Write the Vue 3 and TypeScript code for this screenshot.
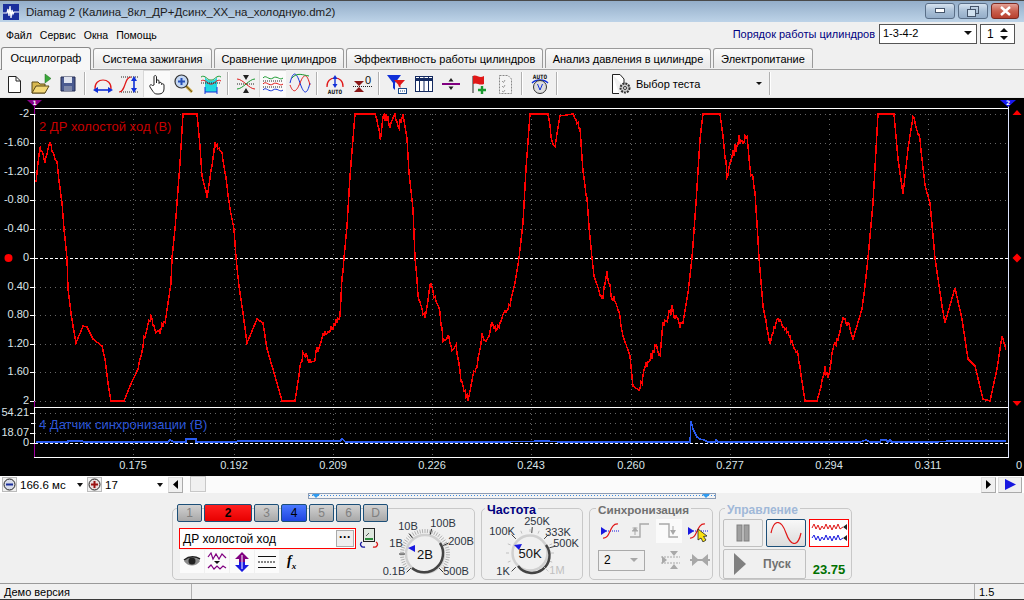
<script setup lang="ts">
const tabs = [
  { name: 'Осциллограф', w: 90 },
  { name: 'Система зажигания', w: 119 },
  { name: 'Сравнение цилиндров', w: 130 },
  { name: 'Эффективность работы цилиндров', w: 197 },
  { name: 'Анализ давления в цилиндре', w: 166 },
  { name: 'Электропитание', w: 100 },
]

const yLabels = [
  { t: '-2', y: 113 }, { t: '-1.60', y: 142 }, { t: '-1.20', y: 171 }, { t: '-0.80', y: 199 },
  { t: '-0.40', y: 228 }, { t: '0', y: 257 }, { t: '0.40', y: 286 }, { t: '0.80', y: 314 },
  { t: '1.20', y: 343 }, { t: '1.60', y: 371 }, { t: '2', y: 400 },
]
const xLabels = [
  { t: '0.175', x: 133 }, { t: '0.192', x: 234 }, { t: '0.209', x: 333 }, { t: '0.226', x: 432 },
  { t: '0.243', x: 531 }, { t: '0.260', x: 631 }, { t: '0.277', x: 730 }, { t: '0.294', x: 829 },
  { t: '0.311', x: 928 },
]

// traced from the trace in the screenshot: x, y
const redPts = [
  36,178, 40,145, 45,160, 50,143, 57,162, 59,182, 62,202, 64,228, 67,257, 68,288, 71,312, 73,325, 76,342,
  83,325, 87,326, 93,338, 102,345, 105,358, 108,382, 111,400, 124,400, 130,385, 138,368, 142,348, 147,325,
  150,317, 158,332, 165,322, 168,302, 171,282, 172,257, 175,228, 177,202, 180,162, 183,113, 197,113, 200,145,
  202,175, 207,195, 210,178, 215,142, 222,152, 227,185, 230,208, 234,228, 236,257, 239,285, 243,312, 247,342,
  257,318, 263,322, 267,348, 277,382, 282,400, 295,400, 300,368, 303,352, 313,362, 322,335, 333,325, 339,315,
  340,312, 342,278, 344,257, 347,225, 350,175, 353,138, 355,113, 375,113, 378,122, 381,140, 383,118, 388,114,
  390,127, 395,115, 399,125, 403,113, 407,138, 409,172, 413,208, 415,257, 417,278, 418,295, 423,312, 425,318,
  430,282, 435,298, 439,305, 443,338, 448,335, 452,348, 456,345, 461,378, 468,400, 473,372, 477,365, 482,335,
  487,340, 492,322, 497,328, 503,315, 510,302, 515,282, 519,257, 523,222, 526,168, 530,113, 548,113, 552,135,
  554,150, 560,115, 573,113, 580,128, 583,172, 587,198, 590,235, 592,257, 594,275, 602,298, 607,273, 612,295,
  617,305, 623,335, 630,355, 633,385, 640,390, 645,365, 652,355, 655,342, 660,352, 663,325, 672,308, 679,322,
  683,322, 688,292, 692,257, 696,202, 700,138, 703,113, 720,113, 723,135, 727,175, 733,152, 740,138, 747,137,
  750,168, 754,182, 757,222, 759,257, 763,305, 767,328, 770,340, 778,318, 787,332, 793,342, 798,355, 805,400,
  817,400, 822,382, 825,368, 828,378, 833,348, 838,338, 843,318, 848,322, 853,338, 862,308, 865,285, 868,257,
  873,202, 878,113, 894,113, 898,158, 903,193, 908,148, 913,115, 920,138, 925,185, 930,202, 935,257, 942,305,
  945,322, 955,287, 962,318, 968,358, 975,365, 983,398, 990,400, 997,368, 1002,335, 1007,352,
]
// x from, x to, how much the signal jitters there
const noisy = [
  [36, 60, 3], [140, 165, 4], [205, 228, 2], [300, 345, 4], [378, 403, 5], [418, 510, 3], [550, 556, 6],
  [575, 590, 3], [600, 620, 5], [640, 680, 5], [725, 755, 6], [765, 800, 3], [822, 850, 3], [912, 925, 2],
]

function jitter(x: number): number {
  const zone = noisy.find((n) => x >= n[0] && x <= n[1])
  if (!zone) return 0
  const r = Math.sin(x * 12.9898) * 43758.5453
  return (r - Math.floor(r) - 0.5) * 2 * zone[2]
}

function buildRed(): string {
  const out: string[] = []
  for (let i = 0; i < redPts.length - 2; i += 2) {
    const [x0, y0, x1, y1] = [redPts[i], redPts[i + 1], redPts[i + 2], redPts[i + 3]]
    for (let x = x0; x < x1; x++) {
      const y = y0 + ((y1 - y0) * (x - x0)) / (x1 - x0) + jitter(x)
      out.push(`${x},${Math.min(400, Math.max(113, y)).toFixed(1)}`)
    }
  }
  return out.join(' ')
}
const redPath = buildRed()

const bluePath =
  '36,441 68,441 68,440 82,440 84,441 168,441 170,439 174,441 186,441 186,438 196,438 196,441 236,441 238,440 ' +
  '300,440 340,440 342,438 346,441 420,441 500,441 546,440 560,441 640,441 660,441 672,441 690,441 691,420 ' +
  '693,428 695,432 697,436 700,438 704,439 708,441 715,441 716,439 718,441 760,441 860,441 866,439 870,441 ' +
  '880,441 881,439 886,439 888,441 890,439 892,441 936,441 950,440 1006,440'

function polar(cx: number, cy: number, r: number, deg: number) {
  const a = (deg * Math.PI) / 180
  return { x: cx + r * Math.cos(a), y: cy + r * Math.sin(a) }
}

function ticks(cx: number, cy: number, r1: number, r2: number, from: number, to: number, n: number) {
  const list = []
  for (let i = 0; i <= n; i++) {
    const d = n ? from + ((to - from) * i) / n : from
    const a = polar(cx, cy, r1, d)
    const b = polar(cx, cy, r2, d)
    list.push({ x1: a.x, y1: a.y, x2: b.x, y2: b.y })
  }
  return list
}

const dial1Fine = ticks(425, 553, 21, 25, 135, 405, 44)
const dial1Major = [135, 180, 232, 285, 335, 405].map((d) => ticks(425, 553, 20, 26, d, d, 0)[0])
const dial2Major = [135, 225, 275, 315, 345, 405].map((d) => ticks(530, 552, 20, 26, d, d, 0)[0])
const dial2Fine = ticks(530, 552, 21, 24, 135, 405, 12)
</script>

<template>
  <div class="window">
    <header class="titlebar">
      <svg class="app-icon" width="16" height="16" viewBox="0 0 16 16">
        <rect width="16" height="16" fill="#1a2f9c" />
        <path d="M0 9H4L5 5L6 12L7 2L8 14L9 6L10 10L11 8H16" fill="none" stroke="#fff" stroke-width="1.2" />
      </svg>
      <span class="title-text">Diamag 2 (Калина_8кл_ДР+Дсинх_ХХ_на_холодную.dm2)</span>
      <div class="win-btns">
        <div class="win-btn">
          <svg width="10" height="6" viewBox="0 0 10 6"><rect x="0.5" y="0.5" width="9" height="4" fill="#fff" stroke="#44546a" /></svg>
        </div>
        <div class="win-btn">
          <svg width="12" height="11" viewBox="0 0 12 11">
            <rect x="3.5" y="0.5" width="8" height="7" fill="none" stroke="#44546a" />
            <rect x="0.5" y="3.5" width="8" height="7" fill="#cfe0ef" stroke="#44546a" />
          </svg>
        </div>
        <div class="win-btn close">
          <svg width="13" height="10" viewBox="0 0 13 10"><path d="M2 1L11 9M11 1L2 9" stroke="#fff" stroke-width="2.4" /></svg>
        </div>
      </div>
    </header>

    <div class="menubar">
      <nav class="menu">
        <span>Файл</span><span>Сервис</span><span>Окна</span><span>Помощь</span>
      </nav>
      <span class="order-label">Порядок работы цилиндров</span>
      <div class="order-select">
        <span>1-3-4-2</span>
        <i class="caret"></i>
      </div>
      <div class="order-spin">
        <span>1</span>
        <div class="spin-arrows"><i class="up"></i><i class="caret"></i></div>
      </div>
    </div>

    <div class="tabs">
      <div
        v-for="(tab, i) in tabs"
        :key="tab.name"
        class="tab"
        :class="{ active: i === 0 }"
        :style="{ width: tab.w + 'px' }"
      >
        {{ tab.name }}
      </div>
    </div>

    <div class="toolbar">
      <div class="tb">
        <svg viewBox="0 0 22 22"><path d="M5.5 3.5H13L17.5 8V19.5H5.5Z" fill="#fff" stroke="#222" /><path d="M13 3.5V8H17.5" fill="none" stroke="#222" /></svg>
      </div>
      <div class="tb">
        <svg viewBox="0 0 22 22">
          <path d="M15 1V10L21 5.5Z" fill="#3aa83a" stroke="#1d6b1d" stroke-width="0.5" />
          <path d="M2 20V9H8L10 11H15V20Z" fill="#d8b850" stroke="#5a4a18" />
          <path d="M2 20L6 13H19L15 20Z" fill="#f3d878" stroke="#5a4a18" />
        </svg>
      </div>
      <div class="tb">
        <svg viewBox="0 0 22 22">
          <path d="M4 4H18V18H4Z" fill="#4a5a90" stroke="#222a50" />
          <rect x="7" y="4" width="8" height="6" fill="#dfe3ee" />
          <rect x="7" y="13" width="8" height="5" fill="#7d87a8" />
        </svg>
      </div>
      <div class="sep"></div>
      <div class="tb">
        <svg viewBox="0 0 22 22">
          <path d="M3 16C2 4 20 4 19 16" fill="none" stroke="#e01818" stroke-width="1.2" />
          <path d="M4 17H18" stroke="#1030d8" stroke-width="1.6" />
          <path d="M1 17L6 14V20ZM21 17L16 14V20Z" fill="#1030d8" />
        </svg>
      </div>
      <div class="tb">
        <svg viewBox="0 0 22 22">
          <path d="M2 4H20M2 19H20" stroke="#222" stroke-dasharray="1 1" />
          <path d="M0 19C7 19 5 4 12 4" fill="none" stroke="#e01818" stroke-width="1.2" />
          <path d="M15 6V17" stroke="#1030d8" stroke-width="1.6" />
          <path d="M15 3L12 8H18ZM15 20L12 15H18Z" fill="#1030d8" />
        </svg>
      </div>
      <div class="tb pressed">
        <svg viewBox="0 0 22 22">
          <path d="M8 12V4C8 2 10.5 2 10.5 4V10V8C10.5 6.5 13 6.5 13 8V10.5C13 9 15.5 9 15.5 10.5V11.5C15.5 10.5 18 10.5 18 12V16C18 19 16 21 13 21H11C9 21 8 20 7 18.5L4 14C3 12 5 11 6.5 12.5Z" fill="#fff" stroke="#222" stroke-width="1" />
        </svg>
      </div>
      <div class="tb">
        <svg viewBox="0 0 22 22">
          <path d="M13 13L19 19" stroke="#c09a30" stroke-width="2.6" />
          <path d="M13 13L19 19" stroke="#222" stroke-width="0.5" />
          <circle cx="8.5" cy="8.5" r="6.5" fill="#c3d6f2" stroke="#333" stroke-width="1.2" />
          <path d="M5 8.5H12M8.5 5V12" stroke="#2750b8" stroke-width="2" />
        </svg>
      </div>
      <div class="tb">
        <svg viewBox="0 0 22 22">
          <path d="M5 4C8 9 14 9 17 4V19H5Z" fill="#22d8e0" />
          <path d="M1 4C5 1 8 8 11 7C14 8 17 1 21 4" fill="none" stroke="#1a9a30" />
          <path d="M1 8C5 5 8 12 11 11C14 12 17 5 21 8" fill="none" stroke="#e01818" />
          <path d="M1 10H21" stroke="#222" stroke-dasharray="1 1" />
          <path d="M5 19H17" stroke="#1030d8" /><path d="M5 14V21M17 14V21" stroke="#1030d8" />
        </svg>
      </div>
      <div class="sep"></div>
      <div class="tb">
        <svg viewBox="0 0 22 22">
          <path d="M2 11H20" stroke="#222" stroke-dasharray="1 1" />
          <path d="M2 6C8 6 14 16 20 16" fill="none" stroke="#e01818" />
          <path d="M2 16C8 16 14 6 20 6" fill="none" stroke="#1a9a30" />
          <path d="M11 7L8 2H14ZM11 15L8 20H14Z" fill="#222" />
        </svg>
      </div>
      <div class="tb pressed">
        <svg viewBox="0 0 22 22">
          <path d="M1 5C4 1 7 8 11 5C15 2 18 8 21 5" fill="none" stroke="#1a9a30" />
          <path d="M1 11C4 7 7 14 11 11C15 8 18 14 21 11" fill="none" stroke="#e01818" />
          <path d="M1 17C4 13 7 20 11 17C15 14 18 20 21 17" fill="none" stroke="#1030d8" />
          <path d="M1 8H21M1 14H21" stroke="#222" stroke-dasharray="1 1" />
        </svg>
      </div>
      <div class="tb">
        <svg viewBox="0 0 22 22">
          <path d="M1 10C4 -2 7 -2 11 10S18 22 21 10" fill="none" stroke="#1030d8" />
          <path d="M1 12C4 20 7 20 11 10S18 0 21 12" fill="none" stroke="#e01818" />
          <path d="M3 5C8 -1 14 2 20 3" fill="none" stroke="#1a9a30" />
        </svg>
      </div>
      <div class="sep"></div>
      <div class="tb">
        <svg viewBox="0 0 22 22">
          <path d="M3 14C2 2 20 2 19 14" fill="none" stroke="#e01818" stroke-width="1.2" />
          <path d="M11 5V13" stroke="#1030d8" stroke-width="1.4" />
          <path d="M11 2L8.5 6H13.5ZM11 15L8.5 11H13.5Z" fill="#1030d8" />
          <text x="11" y="21" class="auto-text">AUTO</text>
        </svg>
      </div>
      <div class="tb">
        <svg viewBox="0 0 22 22">
          <path d="M3 8H13L8 13Z" fill="#8a1818" />
          <path d="M8 14L3 19H13Z" fill="#8a1818" />
          <path d="M2 13.5H21" stroke="#222" stroke-dasharray="1 1" />
          <text x="17" y="11" class="zero-text">0</text>
        </svg>
      </div>
      <div class="sep"></div>
      <div class="tb">
        <svg viewBox="0 0 22 22">
          <path d="M1 2H15L9 10V17L7 15V10Z" fill="#1030d8" />
          <path d="M8 7H19L14.5 12V15L12.5 13V12Z" fill="#e01818" />
          <rect x="12.5" y="15.5" width="8" height="5" fill="#fff" stroke="#1a4a88" />
          <path d="M14 18H19" stroke="#1a4a88" stroke-dasharray="1 1" />
        </svg>
      </div>
      <div class="tb">
        <svg viewBox="0 0 22 22">
          <rect x="2.5" y="3.5" width="17" height="15" fill="#fff" stroke="#142a60" />
          <path d="M2 6.5H20" stroke="#142a60" stroke-width="3" />
          <path d="M6.5 4V18M11 4V18M15.5 4V18" stroke="#142a60" />
        </svg>
      </div>
      <div class="tb">
        <svg viewBox="0 0 22 22">
          <path d="M2 11H20" stroke="#800080" stroke-width="2" />
          <path d="M11 5L8.5 8.5H13.5ZM11 17L8.5 13.5H13.5Z" fill="#222" />
        </svg>
      </div>
      <div class="tb">
        <svg viewBox="0 0 22 22">
          <path d="M6 3V20" stroke="#222" />
          <path d="M6 3C10 1 12 6 17 3V11C12 13 10 9 6 11Z" fill="#e01818" />
          <path d="M11 17H19M15 13V21" stroke="#1a9a30" stroke-width="2.4" />
        </svg>
      </div>
      <div class="tb">
        <svg viewBox="0 0 22 22">
          <path d="M5.5 2.5H14L17.5 6V20.5H5.5Z" fill="#f4f4f4" stroke="#888" stroke-dasharray="2 1" />
          <path d="M8 8L9.5 9.5L11 7M8 13L9.5 14.5L11 12M8 18L9.5 19L11 17" fill="none" stroke="#999" />
        </svg>
      </div>
      <div class="sep"></div>
      <div class="tb">
        <svg viewBox="0 0 22 22">
          <text x="11" y="6" class="auto-text">AUTO</text>
          <path d="M3 10C7 6 15 6 19 10" fill="none" stroke="#1030d8" stroke-width="1.4" />
          <circle cx="11" cy="14" r="6.5" fill="#ddd" stroke="#333" />
          <path d="M8.5 11L11 17L13.5 11" fill="none" stroke="#1030d8" />
        </svg>
      </div>
      <div class="sep"></div>
      <div class="test-select">
        <svg width="22" height="22" viewBox="0 0 22 22">
          <path d="M1.5 1.5H9L13 6V13M1.5 1.5V20.5H8" fill="#fff" stroke="#222" />
          <circle cx="14" cy="15" r="4.5" fill="#ccc" stroke="#333" stroke-dasharray="2 1" stroke-width="2" />
          <circle cx="14" cy="15" r="1.5" fill="#fff" stroke="#333" />
        </svg>
        <span class="test-text">Выбор теста</span>
        <i class="caret test-caret"></i>
      </div>
      <div class="sep"></div>
    </div>

    <svg class="scope" width="1024" height="379" viewBox="0 96 1024 379">
      <rect x="0" y="96" width="1024" height="379" fill="#000" />
      <path d="M0 96.5H1024" stroke="#e8e8e8" />

      <g shape-rendering="crispEdges">
        <path
          v-for="l in yLabels"
          :key="'g' + l.y"
          :d="`M35 ${l.y}.5H1008`"
          stroke="#666"
          stroke-dasharray="1 4"
        />
        <path
          v-for="l in xLabels"
          :key="'v' + l.x"
          :d="`M${l.x}.5 113V460`"
          stroke="#666"
          stroke-dasharray="1 4"
        />
        <path d="M35 412.5H1008M35 422.5H1008M35 432.5H1008" stroke="#666" stroke-dasharray="1 4" />
        <path d="M35 257.5H1008M35 442.5H1008" stroke="#fff" stroke-dasharray="3 2" />
        <path d="M35 107.5H1009M35 406.5H1009M35 456.5H1009" stroke="#fff" />
        <path d="M34.5 107V457" stroke="#fff" />
        <path d="M34.5 105V113M34.5 400V406M34.5 443V456" stroke="#a000a0" />
        <path d="M1008.5 105V457" stroke="#dfe6ff" />
        <path
          v-for="l in yLabels"
          :key="'t' + l.y"
          :d="`M30 ${l.y}.5H34`"
          stroke="#fff"
        />
        <path d="M30 412.5H34M31 422.5H34M30 432.5H34M30 442.5H34" stroke="#fff" />
        <polyline :points="redPath" fill="none" stroke="#ff0000" stroke-width="1.5" />
        <polyline :points="bluePath" fill="none" stroke="#2a5cf0" stroke-width="1.5" />
      </g>

      <text x="39" y="130" class="trace-name red">2 ДР холостой ход (В)</text>
      <text x="39" y="428" class="trace-name blue">4 Датчик синхронизации (В)</text>

      <text v-for="l in yLabels" :key="l.t + l.y" x="29" :y="l.y + 3" class="axis end">{{ l.t }}</text>
      <text x="29" y="415" class="axis end">54.21</text>
      <text x="29" y="435" class="axis end">18.07</text>
      <text x="29" y="445" class="axis end">0</text>
      <text v-for="l in xLabels" :key="l.t" :x="l.x" y="468" class="axis mid">{{ l.t }}</text>
      <text x="1019" y="468" class="axis mid">0</text>

      <path d="M27 99H42L34.5 106Z" fill="#8a008a" />
      <text x="34.5" y="104" class="marker">1</text>
      <path d="M1000 99H1016L1008 106Z" fill="#1818f0" />
      <text x="1008" y="104" class="marker">2</text>

      <circle cx="8.5" cy="257" r="4" fill="#ff0000" />
      <path d="M1017 109L1021.5 114H1012.5Z" fill="#ff0000" />
      <path d="M1017 252.5L1021.5 257L1017 261.5L1012.5 257Z" fill="#ff0000" />
      <path d="M1012.5 400H1021.5L1017 405Z" fill="#ff0000" />
    </svg>

    <div class="timebar">
      <div class="round-btn">
        <svg width="13" height="13" viewBox="0 0 13 13"><circle cx="6.5" cy="6.5" r="5.5" fill="#d8dce8" stroke="#222" /><path d="M3 6.5H10" stroke="#1a2f9c" stroke-width="2" /></svg>
      </div>
      <div class="time-combo first">
        <span>166.6 мс</span><i class="caret"></i>
      </div>
      <div class="round-btn">
        <svg width="13" height="13" viewBox="0 0 13 13"><circle cx="6.5" cy="6.5" r="5.5" fill="#e8dcdc" stroke="#222" /><path d="M3 6.5H10M6.5 3V10" stroke="#9a1010" stroke-width="2" /></svg>
      </div>
      <div class="time-combo second">
        <span>17</span><i class="caret"></i>
      </div>
      <div class="scroll-btn">
        <svg width="5" height="9" viewBox="0 0 5 9"><path d="M5 0V9L0 4.5Z" fill="#000" /></svg>
      </div>
      <div class="scroll-track">
        <div class="scroll-thumb"></div>
      </div>
      <div class="scroll-btn">
        <svg width="5" height="9" viewBox="0 0 5 9"><path d="M0 0V9L5 4.5Z" fill="#000" /></svg>
      </div>
      <div class="scroll-btn wide">
        <svg width="12" height="11" viewBox="0 0 12 11"><path d="M1 0V11L12 5.5Z" fill="#1818e0" /></svg>
      </div>
    </div>

    <section class="panel">
      <div class="overview">
        <svg width="406" height="4" viewBox="0 0 406 4">
          <path d="M0 1.5H406" stroke="#3a8be0" stroke-dasharray="1 2" />
          <path d="M3 0H11L7 4ZM393 0H401L397 4Z" fill="#2f9bf0" />
        </svg>
      </div>

      <div class="groups">
        <div class="group channels">
          <div class="chan-col">
            <div class="chan-row">
              <div class="chan">1</div>
              <div class="chan red">2</div>
              <div class="chan">3</div>
              <div class="chan blue">4</div>
              <div class="chan">5</div>
              <div class="chan">6</div>
              <div class="chan">D</div>
            </div>
            <div class="name-row">
              <div class="name-input">
                <span>ДР холостой ход</span>
                <div class="dots">···</div>
              </div>
              <svg class="meter" width="20" height="21" viewBox="0 0 20 21">
                <rect x="4.5" y="0.5" width="11" height="13" fill="#dfe8df" stroke="#222" />
                <path d="M6 11H14" stroke="#2a8a3a" stroke-width="2" />
                <path d="M7 8L10 5" stroke="#555" />
                <path d="M3 14C0 16 2 20 6 19" fill="none" stroke="#1818a0" stroke-width="1.3" />
                <path d="M17 14C20 16 18 20 14 19" fill="none" stroke="#d81818" stroke-width="1.3" />
              </svg>
            </div>
            <div class="tool-row">
              <div class="mini">
                <svg width="18" height="14" viewBox="0 0 18 14"><path d="M1 6C5 1 13 1 17 6C13 12 5 12 1 6Z" fill="#8a8a8a" /><circle cx="9" cy="6" r="3.5" fill="#222" /><path d="M1 5C6 1 12 1 17 4" stroke="#222" fill="none" stroke-width="1.5" /></svg>
              </div>
              <div class="mini">
                <svg width="20" height="20" viewBox="0 0 20 20"><path d="M1 5L4 1L6 7L9 2L12 7L15 2L19 6" fill="none" stroke="#800080" stroke-width="1.2" /><path d="M1 16L4 13L7 17L10 14L13 17L16 14L19 16" fill="none" stroke="#800080" stroke-width="1.2" /><path d="M7 9H13L10 12Z" fill="#111" /></svg>
              </div>
              <div class="mini">
                <svg width="18" height="22" viewBox="0 0 18 22"><path d="M9 1L16 8H12V11H6V8H2Z" fill="#800080" /><path d="M9 21L16 14H12V11H6V14H2Z" fill="#1818e0" /><path d="M9 4V18" stroke="#fff" /></svg>
              </div>
              <div class="mini">
                <svg width="20" height="16" viewBox="0 0 20 16"><path d="M1 2.5H19M1 13.5H19" stroke="#111" /><path d="M1 8H19" stroke="#111" stroke-dasharray="2 1" /></svg>
              </div>
              <span class="fx">f<sub>x</sub></span>
            </div>
          </div>
          <svg class="dial" width="96" height="71" viewBox="378 507 96 71">
            <line v-for="(t, i) in dial1Fine" :key="i" :x1="t.x1" :y1="t.y1" :x2="t.x2" :y2="t.y2" stroke="#b0b0b0" />
            <circle cx="425" cy="553" r="19" fill="#f0f0f0" stroke="#d0d0d0" stroke-width="2.5" />
            <path d="M412 567A19 19 0 0 0 440 542" fill="none" stroke="#444" stroke-width="2.5" />
            <line v-for="(t, i) in dial1Major" :key="i" :x1="t.x1" :y1="t.y1" :x2="t.x2" :y2="t.y2" stroke="#333" />
            <path d="M408 547L415 544V551Z" fill="#1818e0" />
            <text x="425" y="558" class="dial-value">2В</text>
            <text x="408" y="529" class="dial-label">10В</text>
            <text x="443" y="526" class="dial-label">100В</text>
            <text x="461" y="544" class="dial-label">200В</text>
            <text x="456" y="574" class="dial-label">500В</text>
            <text x="394" y="574" class="dial-label">0.1В</text>
            <text x="396" y="546" class="dial-label">1В</text>
          </svg>
        </div>

        <div class="group freq">
          <span class="legend navy">Частота</span>
          <svg class="dial" width="102" height="71" viewBox="481 507 102 71">
            <line v-for="(t, i) in dial2Fine" :key="i" :x1="t.x1" :y1="t.y1" :x2="t.x2" :y2="t.y2" stroke="#c0c0c0" />
            <circle cx="530" cy="552" r="17.5" fill="#f0f0f0" stroke="#d0d0d0" stroke-width="2.5" />
            <path d="M518 565A17.5 17.5 0 0 0 546 544" fill="none" stroke="#444" stroke-width="2.5" />
            <line v-for="(t, i) in dial2Major" :key="i" :x1="t.x1" :y1="t.y1" :x2="t.x2" :y2="t.y2" :stroke="i === 5 ? '#c8c8c8' : '#444'" />
            <path d="M514 544L522 543L519 549Z" fill="#1818e0" />
            <text x="530" y="557" class="dial-value">50K</text>
            <text x="537" y="524" class="dial-label">250K</text>
            <text x="502" y="534" class="dial-label">100K</text>
            <text x="558" y="535" class="dial-label">333K</text>
            <text x="566" y="546" class="dial-label">500K</text>
            <text x="503" y="574" class="dial-label">1K</text>
            <text x="557" y="573" class="dial-label off">1M</text>
          </svg>
        </div>

        <div class="group sync">
          <span class="legend gray">Синхронизация</span>
          <div class="sync-row">
            <div class="sync-ic">
              <svg width="22" height="22" viewBox="0 0 22 22">
                <path d="M1 7L7 11L1 15Z" fill="#1818e0" /><path d="M6 11H20" stroke="#1818e0" stroke-dasharray="1 1" />
                <path d="M3 18C11 19 9 3 18 4" fill="none" stroke="#e01818" stroke-width="1.2" />
              </svg>
            </div>
            <div class="sync-ic">
              <svg width="22" height="22" viewBox="0 0 22 22"><path d="M1 17H11V4H20" fill="none" stroke="#a8a8a8" stroke-width="1.4" /><path d="M6 15V8M3.5 8H8.5M3 11H9" stroke="#a8a8a8" /><path d="M6 7L3 11H9Z" fill="#a8a8a8" /></svg>
            </div>
            <div class="sync-ic pressed">
              <svg width="22" height="22" viewBox="0 0 22 22"><path d="M1 4H11V17H20" fill="none" stroke="#a8a8a8" stroke-width="1.4" /><path d="M15 6V12" stroke="#a8a8a8" /><path d="M15 15L12 10H18Z" fill="#a8a8a8" /></svg>
            </div>
            <div class="sync-ic">
              <svg width="22" height="22" viewBox="0 0 22 22">
                <path d="M1 7L7 11L1 15Z" fill="#1818e0" /><path d="M6 11H21" stroke="#1818e0" stroke-dasharray="1 1" />
                <path d="M3 18C11 19 9 3 18 4" fill="none" stroke="#e01818" stroke-width="1.2" />
                <path d="M11 9L11 20L14 18L16 22L19 20L16.5 16.5L20 16Z" fill="#f8e010" stroke="#222" stroke-width="0.8" />
              </svg>
            </div>
          </div>
          <div class="sync-row second">
            <div class="sync-combo"><span>2</span><i class="caret dim"></i></div>
            <div class="sync-ic tail">
              <svg width="22" height="20" viewBox="0 0 22 20"><path d="M2 6V14L7 10Z" fill="#a8a8a8" /><path d="M1 7H20M1 13H20" stroke="#a8a8a8" stroke-dasharray="2 1" /><path d="M14 6L10 1H18ZM14 14L10 19H18Z" fill="#a8a8a8" /></svg>
            </div>
            <div class="sync-ic">
              <svg width="22" height="14" viewBox="0 0 22 14"><path d="M1 7H21" stroke="#a8a8a8" stroke-width="2" /><path d="M3 1L10 7L3 13ZM19 1L12 7L19 13Z" fill="#a8a8a8" /></svg>
            </div>
          </div>
        </div>

        <div class="group control">
          <span class="legend light">Управление</span>
          <div class="ctl-grid">
            <div class="ctl-btn">
              <svg width="14" height="18" viewBox="0 0 14 18"><rect x="1" y="1" width="5" height="16" fill="#a0a0a0" stroke="#808080" /><rect x="8" y="1" width="5" height="16" fill="#a0a0a0" stroke="#808080" /></svg>
            </div>
            <div class="ctl-btn sine">
              <svg width="32" height="22" viewBox="0 0 32 22"><path d="M1 11C4 -3 11 -3 16 11S28 25 31 11" fill="none" stroke="#e01818" stroke-width="1.2" /></svg>
            </div>
            <div class="ctl-btn noise">
              <svg width="36" height="24" viewBox="0 0 36 24">
                <path d="M1 7L3 3L5 8L7 4L9 9L11 5L13 8L15 3L17 8L19 4L21 9L23 4L25 8L27 3L29 8L32 6" fill="none" stroke="#e01818" />
                <path d="M1 17L3 14L5 19L7 15L9 20L11 16L13 19L15 14L17 19L19 15L21 20L23 15L25 19L27 14L29 19L32 17" fill="none" stroke="#1818e0" />
                <path d="M36 3V9L32 6ZM36 14V20L32 17Z" fill="#222" />
              </svg>
            </div>
            <div class="ctl-btn run">
              <svg width="12" height="22" viewBox="0 0 12 22"><path d="M0 0V22L12 11Z" fill="#808080" /></svg>
              <span>Пуск</span>
            </div>
            <span class="freq-value">23.75</span>
          </div>
        </div>
      </div>
    </section>

    <footer class="statusbar">
      <div class="cell demo">Демо версия</div>
      <div class="cell grow"></div>
      <div class="cell last">1.5</div>
    </footer>
  </div>
</template>

<style scoped>
.window {
  width: 1024px;
  height: 600px;
  display: flex;
  flex-direction: column;
  background: #f0f0f0;
  font-family: "Liberation Sans", Arial, sans-serif;
  font-size: 11px;
  color: #000;
  overflow: hidden;
}

.titlebar {
  height: 22px;
  flex: none;
  box-sizing: border-box;
  border-top: 1px solid #4a4a4a;
  display: flex;
  align-items: center;
  padding: 0 5px 0 3px;
  background: linear-gradient(#94aec9, #bdd3e8);
}
.app-icon {
  flex: none;
}
.title-text {
  margin-left: 7px;
  font-size: 11.5px;
  color: #1c1c1c;
  flex: 1;
}
.win-btns {
  display: flex;
  gap: 3px;
  margin-top: -1px;
}
.win-btn {
  width: 30px;
  height: 16px;
  box-sizing: border-box;
  border: 1px solid #5a6f88;
  border-radius: 3px;
  background: linear-gradient(#d5e2ef, #a9bfd6 50%, #94adc8);
  display: flex;
  align-items: center;
  justify-content: center;
}
.win-btn.close {
  width: 28px;
  border-color: #7a2a22;
  background: linear-gradient(#e3a196, #c9604f 50%, #b8402e);
}

.menubar {
  height: 24px;
  flex: none;
  display: flex;
  align-items: center;
  padding: 0 9px 0 6px;
}
.menu {
  display: flex;
  gap: 8px;
  flex: 1;
  margin-top: 1px;
  font-size: 10.5px;
}
.order-label {
  color: #000080;
  margin-right: 4px;
}
.order-select {
  width: 98px;
  height: 20px;
  box-sizing: border-box;
  border: 1px solid #555;
  background: #fff;
  display: flex;
  align-items: center;
  justify-content: space-between;
  padding: 0 4px 2px 3px;
}
.order-spin {
  width: 35px;
  height: 20px;
  margin-left: 3px;
  box-sizing: border-box;
  border: 1px solid #555;
  background: #fff;
  display: flex;
  align-items: center;
  justify-content: space-between;
  padding: 0 6px;
  font-size: 12px;
}
.spin-arrows {
  display: flex;
  flex-direction: column;
  gap: 4px;
}
.caret {
  display: block;
  width: 0;
  height: 0;
  border-left: 4px solid transparent;
  border-right: 4px solid transparent;
  border-top: 4px solid #111;
}
.caret.dim {
  border-top-color: #a8a8a8;
}
.up {
  display: block;
  width: 0;
  height: 0;
  border-left: 4px solid transparent;
  border-right: 4px solid transparent;
  border-bottom: 4px solid #111;
}

.tabs {
  height: 23px;
  flex: none;
  display: flex;
  align-items: flex-end;
  gap: 2px;
  padding-left: 1px;
  position: relative;
  z-index: 1;
}
.tab {
  height: 20px;
  box-sizing: border-box;
  border: 1px solid #9a9a9a;
  border-bottom: none;
  border-radius: 3px 3px 0 0;
  background: linear-gradient(#fbfbfb, #e9e9e9);
  display: flex;
  align-items: center;
  justify-content: center;
  white-space: nowrap;
  margin-bottom: 1px;
}
.tab.active {
  height: 23px;
  margin-bottom: -1px;
  background: #f7f7f7;
  border-color: #8a8a8a;
  padding-bottom: 3px;
}

.toolbar {
  height: 27px;
  flex: none;
  display: flex;
  align-items: stretch;
  border-top: 1px solid #a0a0a0;
  background: #f0f0f0;
}
.tb {
  width: 27px;
  flex: none;
  display: flex;
  align-items: center;
  justify-content: center;
}
.tb svg {
  width: 22px;
  height: 22px;
  overflow: visible;
}
.tb.pressed {
  background: #fafafa;
  box-shadow: inset 1px 1px 0 #d8d8d8;
}
.sep {
  width: 8px;
  flex: none;
  position: relative;
}
.sep::after {
  content: "";
  position: absolute;
  left: 3px;
  top: 2px;
  bottom: 2px;
  width: 1px;
  background: #b0b0b0;
  box-shadow: 1px 0 0 #fff;
}
.auto-text {
  font-family: "DejaVu Sans Mono", monospace;
  font-size: 6px;
  font-weight: 700;
  text-anchor: middle;
  fill: #111;
}
.zero-text {
  font-family: "Liberation Sans", sans-serif;
  font-size: 11px;
  text-anchor: middle;
  fill: #111;
}
.test-select {
  width: 205px;
  flex: none;
  display: flex;
  align-items: center;
  padding-left: 50px;
  box-sizing: border-box;
}
.test-text {
  margin-left: 3px;
  font-size: 11px;
}
.test-caret {
  margin-left: 56px;
  border-left-width: 3px;
  border-right-width: 3px;
  border-top-width: 3px;
}

.scope {
  display: block;
  flex: none;
}
.trace-name {
  font-size: 13px;
}
.trace-name.red {
  fill: #c80000;
}
.trace-name.blue {
  fill: #2a55d8;
}
.axis {
  font-size: 11px;
  fill: #dbe4e8;
}
.end {
  text-anchor: end;
}
.mid {
  text-anchor: middle;
}
.marker {
  font-family: "DejaVu Sans", sans-serif;
  font-size: 6px;
  font-weight: 700;
  fill: #fff;
  text-anchor: middle;
}

.timebar {
  height: 17px;
  flex: none;
  display: flex;
  align-items: center;
  background: #fff;
  padding: 0 2px;
}
.round-btn {
  width: 15px;
  height: 15px;
  flex: none;
  box-sizing: border-box;
  border: 1px solid #bbb;
  background: #f0f0f0;
  display: flex;
  align-items: center;
  justify-content: center;
}
.time-combo {
  display: flex;
  align-items: center;
  justify-content: space-between;
  box-sizing: border-box;
  padding: 0 4px 0 3px;
  font-size: 11.5px;
  flex: none;
}
.time-combo .caret {
  border-left-width: 3.5px;
  border-right-width: 3.5px;
}
.time-combo.first {
  width: 70px;
}
.time-combo.second {
  width: 65px;
  margin-right: 1px;
}
.scroll-btn {
  width: 15px;
  height: 16px;
  flex: none;
  box-sizing: border-box;
  border: 1px solid #aaa;
  border-top-color: #ddd;
  border-left-color: #ddd;
  background: #f0f0f0;
  display: flex;
  align-items: center;
  justify-content: center;
}
.scroll-btn.wide {
  width: 24px;
  margin-left: 2px;
}
.scroll-track {
  flex: 1;
  height: 17px;
  background: #fbfbfb;
  padding-left: 7px;
}
.scroll-thumb {
  width: 16px;
  height: 16px;
  box-sizing: border-box;
  border: 1px solid #c8c8c8;
  background: #f0f0f0;
}

.panel {
  flex: none;
  height: 91px;
  display: flex;
  flex-direction: column;
  align-items: center;
}
.overview {
  width: 408px;
  height: 6px;
  box-sizing: border-box;
  border: 1px solid #8d9db5;
  background: #f4f4f4;
  margin-bottom: 9px;
  display: flex;
  overflow: hidden;
}
.groups {
  display: flex;
  gap: 6px;
}
.group {
  position: relative;
  height: 72px;
  box-sizing: border-box;
  border: 1px solid #c8c8c8;
  border-radius: 5px;
  display: flex;
}
.legend {
  position: absolute;
  top: -6px;
  font-weight: 700;
  background: #f0f0f0;
  padding: 0 2px;
  line-height: 14px;
  white-space: nowrap;
}
.navy {
  left: 3px;
  font-size: 12.5px;
  color: #000080;
}
.gray {
  left: 6px;
  font-size: 11.7px;
  color: #707070;
}
.light {
  left: 5px;
  font-size: 12px;
  color: #a0b8d8;
}

.channels {
  width: 303px;
}
.chan-col {
  width: 205px;
  margin-top: -5px;
  padding-left: 4px;
  flex: none;
  box-sizing: border-box;
}
.chan-row {
  display: flex;
  gap: 2px;
  height: 18px;
}
.chan {
  width: 25px;
  flex: none;
  box-sizing: border-box;
  border: 1px solid #1c4f78;
  border-radius: 2px;
  background: linear-gradient(#d2d2d2, #a8a8a8);
  color: #808080;
  font-size: 12px;
  display: flex;
  align-items: center;
  justify-content: center;
}
.chan.red {
  width: 48px;
  background: linear-gradient(#ff2020, #e80000);
  color: #000;
  font-weight: 700;
}
.chan.blue {
  width: 26px;
  background: linear-gradient(#4a78ff, #1f45e0);
  color: #000;
}
.name-row {
  display: flex;
  align-items: center;
  gap: 3px;
  margin: 6px 0 0 2px;
  width: 200px;
}
.name-input {
  width: 177px;
  height: 21px;
  flex: none;
  box-sizing: border-box;
  border: 1px solid #ff0000;
  background: #fff;
  display: flex;
  align-items: center;
  justify-content: space-between;
  padding-left: 3px;
  font-size: 12px;
}
.meter {
  flex: none;
}
.dots {
  width: 18px;
  height: 17px;
  box-sizing: border-box;
  border: 1px solid #aaa;
  background: #eee;
  margin-right: 1px;
  text-align: center;
  line-height: 13px;
  font-weight: 700;
}
.tool-row {
  display: flex;
  gap: 1px;
  align-items: center;
  margin: 1px 0 0 3px;
}
.mini {
  width: 24px;
  height: 23px;
  background: #fbfbfb;
  display: flex;
  align-items: center;
  justify-content: center;
}
.fx {
  font-family: "Liberation Serif", serif;
  font-style: italic;
  font-weight: 700;
  font-size: 14px;
  margin-left: 7px;
}
.fx sub {
  font-size: 9px;
}
.dial {
  display: block;
  flex: none;
  margin-top: -1px;
}
.dial-value {
  font-size: 13px;
  text-anchor: middle;
  fill: #111;
}
.dial-label {
  font-size: 11px;
  text-anchor: middle;
  fill: #2e3440;
}
.dial-label.off {
  fill: #c0c0c0;
}

.freq {
  width: 102px;
}
.freq .dial {
  margin-left: -1px;
}
.sync {
  width: 124px;
  flex-direction: column;
  padding: 10px 6px 0 8px;
  box-sizing: border-box;
}
.sync-row {
  display: flex;
  align-items: center;
  gap: 3px;
  height: 24px;
}
.sync-row.second {
  margin-top: 6px;
  height: 22px;
}
.sync-ic {
  width: 26px;
  height: 24px;
  flex: none;
  display: flex;
  align-items: center;
  justify-content: center;
}
.sync-ic.pressed {
  background: #fafafa;
}
.sync-ic.tail {
  margin-left: 10px;
}
.sync-combo {
  width: 47px;
  height: 21px;
  flex: none;
  box-sizing: border-box;
  border: 1px solid #aaa;
  display: flex;
  align-items: center;
  justify-content: space-between;
  padding: 0 6px 0 5px;
  font-size: 12px;
}

.control {
  width: 133px;
}
.ctl-grid {
  display: grid;
  grid-template-columns: 40px 40px 40px;
  grid-template-rows: 28px 30px;
  column-gap: 3px;
  row-gap: 2px;
  margin: 10px 0 0 3px;
}
.ctl-btn {
  box-sizing: border-box;
  border: 1px solid #c0c0c0;
  border-radius: 2px;
  background: #f0f0f0;
  display: flex;
  align-items: center;
  justify-content: center;
}
.ctl-btn.sine {
  border-color: #1c4f78;
  background: linear-gradient(#f8f8f8, #dcdcdc);
}
.ctl-btn.noise {
  border: 1px solid #ff0000;
  background: #fff;
  border-radius: 0;
}
.ctl-btn.run {
  grid-column: 1 / span 2;
  justify-content: flex-start;
  padding-left: 10px;
  gap: 17px;
  font-size: 12px;
  font-weight: 700;
  color: #707070;
}
.freq-value {
  align-self: end;
  text-align: center;
  font-size: 13px;
  font-weight: 700;
  color: #007000;
  line-height: 16px;
  margin-bottom: 1px;
}

.statusbar {
  flex: 1;
  display: flex;
  border-top: 1px solid #9a9a9a;
  border-bottom: 2px solid #3a3a3a;
  margin-top: -1px;
}
.cell {
  border-right: 1px solid #b0b0b0;
  padding: 1px 0 0 4px;
  line-height: 14px;
  box-sizing: border-box;
}
.demo {
  width: 192px;
}
.grow {
  flex: 1;
}
.last {
  width: 49px;
  border-right: none;
}
</style>

<style>
html,
body {
  margin: 0;
  overflow: hidden;
}
</style>
